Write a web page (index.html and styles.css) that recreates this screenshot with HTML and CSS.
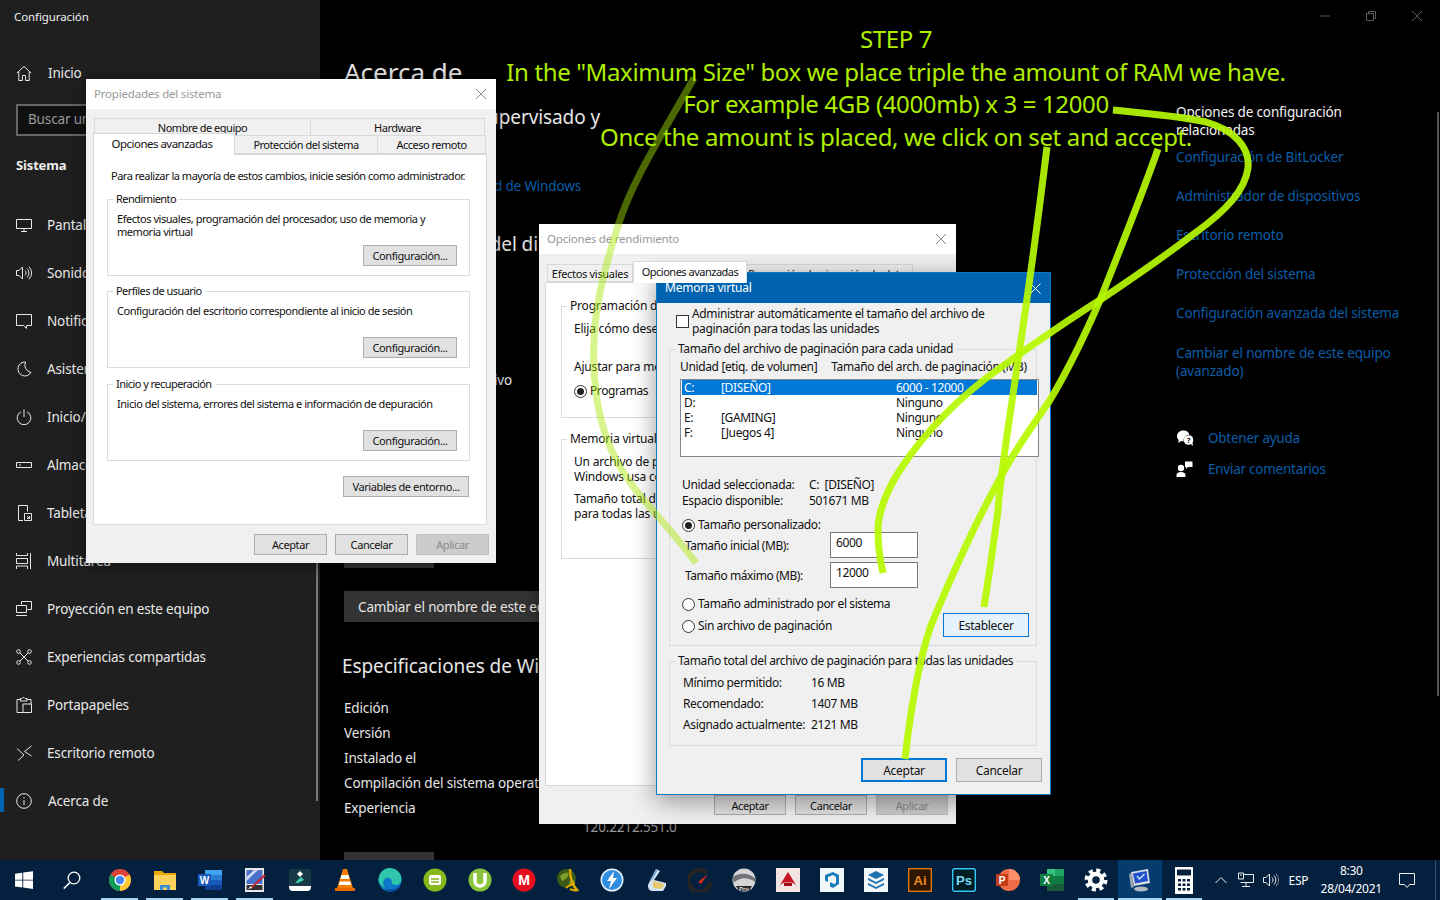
FILE: index.html
```html
<!DOCTYPE html>
<html lang="es">
<head>
<meta charset="utf-8">
<title>Configuración</title>
<link rel="stylesheet" href="styles.css">
</head>
<body>
<svg class="defs" aria-hidden="true">
  <defs>
    <symbol id="i-home" viewBox="0 0 16 16"><path d="M.8 8.2 8 1.4l7.2 6.8M2.8 6.6v8.9h3.6v-5h3.2v5h3.6V6.6"/></symbol>
    <symbol id="i-display" viewBox="0 0 16 16"><path d="M.5 2.5h15v9H.5zM8 11.5v3M5 14.5h6"/></symbol>
    <symbol id="i-sound" viewBox="0 0 16 16"><path d="M.5 5.5h2.5l3.5-3.5v12L3 10.5H.5zM9 5.5a3.4 3.4 0 0 1 0 5M11 3.5a6.2 6.2 0 0 1 0 9M13 1.8a8.8 8.8 0 0 1 0 12.4"/></symbol>
    <symbol id="i-notif" viewBox="0 0 16 16"><path d="M.5 1.5h15v11h-5v3l-3-3h-7z"/></symbol>
    <symbol id="i-moon" viewBox="0 0 16 16"><path d="M9.5 1a7 7 0 1 0 5.5 10.5A7.5 7.5 0 0 1 9.5 1z"/></symbol>
    <symbol id="i-power" viewBox="0 0 16 16"><path d="M5 2.8a6.8 6.8 0 1 0 6 0M8 .5v7.5"/></symbol>
    <symbol id="i-storage" viewBox="0 0 16 16"><path d="M.5 5.5h15v5H.5zM3 8h2"/></symbol>
    <symbol id="i-tablet" viewBox="0 0 16 16"><path d="M2.5.5h9v6M7 15.5H2.5V.5M8.5 8.5h7v7h-7zM11 11l2.5 2.5M13.500 11v2.500H11"/></symbol>
    <symbol id="i-multi" viewBox="0 0 16 16"><path d="M.5 0v2.500h11V0M3.500 5.500h8M.5 5.500v5h11v-5zM.5 16v-3h11v3M14.500 0v16"/></symbol>
    <symbol id="i-project" viewBox="0 0 16 16"><path d="M5.500 3.500V.5h10v8h-4M.5 4.500h10v7H.5zM0 14.500h11"/></symbol>
    <symbol id="i-share" viewBox="0 0 16 16"><circle cx="2.500" cy="2.500" r="1.800"/><circle cx="13.500" cy="2.500" r="1.800"/><circle cx="2.500" cy="13.500" r="1.800"/><circle cx="13.500" cy="13.500" r="1.800"/><path d="m4 4 8 8M12 4l-8 8"/></symbol>
    <symbol id="i-clip" viewBox="0 0 16 16"><path d="M5 2.500H1v13h6M11 2.500h4v5M4.500 4V1.500H6L7 .5h1l1 1h2V4zM7 7h8.500v8.500H7zM7 7"/></symbol>
    <symbol id="i-remote" viewBox="0 0 16 16"><path d="m1 3.500 7 6.500-6 5.500M15.500 1 8.500 6.500 15.500 11"/></symbol>
    <symbol id="i-info" viewBox="0 0 16 16"><circle cx="8" cy="8" r="7.300"/><path d="M8 7v5M8 4v1.500"/></symbol>
  </defs>
</svg>

<div class="screen">
  <div class="app">
    <aside class="side">
      <div class="app-title">Configuración</div>
      <div class="nav-row nav-home"><svg class="ico"><use href="#i-home"/></svg><span>Inicio</span></div>
      <div class="search">Buscar una configuración</div>
      <div class="side-head">Sistema</div>
      <nav class="nav">
        <div class="nav-row"><svg class="ico"><use href="#i-display"/></svg><span>Pantalla</span></div>
        <div class="nav-row"><svg class="ico"><use href="#i-sound"/></svg><span>Sonido</span></div>
        <div class="nav-row"><svg class="ico"><use href="#i-notif"/></svg><span>Notificaciones y acciones</span></div>
        <div class="nav-row"><svg class="ico"><use href="#i-moon"/></svg><span>Asistente de concentración</span></div>
        <div class="nav-row"><svg class="ico"><use href="#i-power"/></svg><span>Inicio/apagado y suspensión</span></div>
        <div class="nav-row"><svg class="ico"><use href="#i-storage"/></svg><span>Almacenamiento</span></div>
        <div class="nav-row"><svg class="ico"><use href="#i-tablet"/></svg><span>Tableta</span></div>
        <div class="nav-row"><svg class="ico"><use href="#i-multi"/></svg><span>Multitarea</span></div>
        <div class="nav-row"><svg class="ico"><use href="#i-project"/></svg><span>Proyección en este equipo</span></div>
        <div class="nav-row"><svg class="ico"><use href="#i-share"/></svg><span>Experiencias compartidas</span></div>
        <div class="nav-row"><svg class="ico"><use href="#i-clip"/></svg><span>Portapapeles</span></div>
        <div class="nav-row"><svg class="ico"><use href="#i-remote"/></svg><span>Escritorio remoto</span></div>
        <div class="nav-row nav-active"><svg class="ico"><use href="#i-info"/></svg><span>Acerca de</span></div>
      </nav>
      <div class="side-scroll"></div>
    </aside>

    <main class="main">
      <div class="caption">
        <div class="cap-btn"><svg width="10" height="10" viewBox="0 0 10 10"><path d="M0 5h10"/></svg></div>
        <div class="cap-btn"><svg width="10" height="10" viewBox="0 0 10 10"><path d="M.5 2.500h7v7h-7zM2.500 2.500v-2h7v7h-2"/></svg></div>
        <div class="cap-btn"><svg width="10" height="10" viewBox="0 0 10 10"><path d="m0 0 10 10M10 0 0 10"/></svg></div>
      </div>
      <div class="main-body">
        <section class="content">
          <h1 class="h-page">Acerca de</h1>
          <p class="h-sub hidden-left">El equipo está supervisado y</p>
          <p class="link-line hidden-left">Configuración de seguridad de Windows</p>
          <p class="h-sub2 hidden-left">Especificaciones del di</p>
          <p class="text-line hidden-left">Tipo de sistema operativo</p>
          <div class="btn-dark btn-copy"></div>
          <div class="btn-dark btn-rename">Cambiar el nombre de este equipo</div>
          <h2 class="h-spec">Especificaciones de Windows</h2>
          <dl class="spec">
            <dt>Edición</dt><dd>Windows 10 Pro</dd>
            <dt>Versión</dt><dd>20H2</dd>
            <dt>Instalado el</dt><dd>28/04/2021</dd>
            <dt>Compilación del sistema operativo</dt><dd>19042.928</dd>
            <dt>Experiencia</dt><dd>Windows Feature Experience Pack<br><span class="ver">120.2212.551.0</span></dd>
          </dl>
          <div class="btn-dark btn-last"></div>
        </section>
        <section class="related">
          <div class="rel-head">Opciones de configuración relacionadas</div>
          <a class="rel-link">Configuración de BitLocker</a>
          <a class="rel-link">Administrador de dispositivos</a>
          <a class="rel-link">Escritorio remoto</a>
          <a class="rel-link">Protección del sistema</a>
          <a class="rel-link">Configuración avanzada del sistema</a>
          <a class="rel-link">Cambiar el nombre de este equipo (avanzado)</a>
          <div class="rel-help">
            <svg width="18" height="16" viewBox="0 0 18 16"><path class="fill-w" d="M1 6.500C1 3 3.800 .5 7 .5s6 1.500 6.300 4.200a5.500 5.500 0 0 0-5.800 5.300c0 .6.100 1 .2 1.400-1 0-1.800-.1-2.600-.4L2 13l.8-3C1.700 9 1 7.900 1 6.500z"/><circle class="fill-w" cx="12.500" cy="10" r="4.800"/><path class="fill-w" d="m14 13 3 3-.6-4z"/><text class="q" x="12.500" y="12.800">?</text></svg>
            <a>Obtener ayuda</a>
          </div>
          <div class="rel-help rel-help2">
            <svg width="18" height="16" viewBox="0 0 18 16"><circle class="fill-w" cx="5" cy="7" r="3.200"/><path class="fill-w" d="M.5 16v-2c0-2 2-3 4.500-3s4.500 1 4.500 3v2zM9 .5h7.500v5.500H12l-2 2V6H9z"/></svg>
            <a>Enviar comentarios</a>
          </div>
        </section>
      </div>
      <div class="main-scroll"></div>
    </main>
  </div>

  <!-- Propiedades del sistema -->
  <div class="win win-sys">
    <div class="win-title"><span>Propiedades del sistema</span><svg class="x" width="10" height="10" viewBox="0 0 10 10"><path d="m0 0 10 10M10 0 0 10"/></svg></div>
    <div class="sys-tabs">
      <div class="tab-row">
        <div class="tab t1">Nombre de equipo</div>
        <div class="tab t2">Hardware</div>
      </div>
      <div class="tab-row tab-row2">
        <div class="tab tab-on t3">Opciones avanzadas</div>
        <div class="tab t4">Protección del sistema</div>
        <div class="tab t5">Acceso remoto</div>
      </div>
    </div>
    <div class="sys-panel">
      <p class="sys-lead">Para realizar la mayoría de estos cambios, inicie sesión como administrador.</p>
      <fieldset class="grp sys-grp">
        <legend>Rendimiento</legend>
        <p>Efectos visuales, programación del procesador, uso de memoria y memoria virtual</p>
        <button class="btn btn-conf">Configuración...</button>
      </fieldset>
      <fieldset class="grp sys-grp">
        <legend>Perfiles de usuario</legend>
        <p>Configuración del escritorio correspondiente al inicio de sesión</p>
        <button class="btn btn-conf">Configuración...</button>
      </fieldset>
      <fieldset class="grp sys-grp">
        <legend>Inicio y recuperación</legend>
        <p>Inicio del sistema, errores del sistema e información de depuración</p>
        <button class="btn btn-conf">Configuración...</button>
      </fieldset>
      <button class="btn btn-env">Variables de entorno...</button>
    </div>
    <div class="sys-foot">
      <button class="btn">Aceptar</button>
      <button class="btn">Cancelar</button>
      <button class="btn btn-off">Aplicar</button>
    </div>
  </div>

  <!-- Opciones de rendimiento -->
  <div class="win win-perf">
    <div class="win-title"><span>Opciones de rendimiento</span><svg class="x" width="10" height="10" viewBox="0 0 10 10"><path d="m0 0 10 10M10 0 0 10"/></svg></div>
    <div class="perf-tabs">
      <div class="tab p1">Efectos visuales</div>
      <div class="tab tab-on p2">Opciones avanzadas</div>
      <div class="tab p3">Prevención de ejecución de datos</div>
    </div>
    <div class="perf-panel">
      <fieldset class="grp perf-g1">
        <legend>Programación del procesador</legend>
        <p class="pl">Elija cómo desea asignar los recursos</p>
        <p class="pl pl-gap">Ajustar para mejorar el rendimiento de:</p>
        <div class="radio-row perf-radio"><span class="radio radio-on"></span>Programas</div>
      </fieldset>
      <fieldset class="grp perf-g2">
        <legend>Memoria virtual</legend>
        <p class="pl">Un archivo de paginación es un área del disco<br>Windows usa como si fuera RAM.</p>
        <p class="pl pl-gap2">Tamaño total de archivo de paginación<br>para todas las unidades:</p>
      </fieldset>
    </div>
    <div class="perf-foot">
      <button class="btn">Aceptar</button>
      <button class="btn">Cancelar</button>
      <button class="btn btn-off">Aplicar</button>
    </div>
  </div>

  <!-- Memoria virtual -->
  <div class="win win-vm">
    <div class="vm-title"><span>Memoria virtual</span><svg class="x-w" width="11" height="11" viewBox="0 0 11 11"><path d="m.5.5 10 10M10.500.5l-10 10"/></svg></div>
    <div class="vm-body">
      <div class="vm-auto"><span class="check"></span><span>Administrar automáticamente el tamaño del archivo de paginación para todas las unidades</span></div>
      <fieldset class="grp vm-g1">
        <legend>Tamaño del archivo de paginación para cada unidad</legend>
        <div class="vm-head"><span>Unidad [etiq. de volumen]</span><span>Tamaño del arch. de paginación (MB)</span></div>
        <div class="vm-list">
          <div class="vm-row vm-row-on"><span>C:</span><span>[DISEÑO]</span><span>6000 - 12000</span></div>
          <div class="vm-row"><span>D:</span><span></span><span>Ninguno</span></div>
          <div class="vm-row"><span>E:</span><span>[GAMING]</span><span>Ninguno</span></div>
          <div class="vm-row"><span>F:</span><span>[Juegos 4]</span><span>Ninguno</span></div>
        </div>
        <div class="vm-info">
          <span>Unidad seleccionada:</span><span>C:&nbsp; [DISEÑO]</span>
          <span>Espacio disponible:</span><span>501671 MB</span>
        </div>
        <div class="radio-row vm-r1"><span class="radio radio-on"></span>Tamaño personalizado:</div>
        <div class="vm-size vm-size1"><label>Tamaño inicial (MB):</label><div class="field">6000</div></div>
        <div class="vm-size vm-size2"><label>Tamaño máximo (MB):</label><div class="field">12000</div></div>
        <div class="radio-row vm-r2"><span class="radio"></span>Tamaño administrado por el sistema</div>
        <div class="vm-last">
          <div class="radio-row vm-r3"><span class="radio"></span>Sin archivo de paginación</div>
          <button class="btn btn-set">Establecer</button>
        </div>
      </fieldset>
      <fieldset class="grp vm-g2">
        <legend>Tamaño total del archivo de paginación para todas las unidades</legend>
        <div class="vm-total">
          <span>Mínimo permitido:</span><span>16 MB</span>
          <span>Recomendado:</span><span>1407 MB</span>
          <span>Asignado actualmente:</span><span>2121 MB</span>
        </div>
      </fieldset>
      <div class="vm-foot">
        <button class="btn btn-vm btn-def">Aceptar</button>
        <button class="btn btn-vm">Cancelar</button>
      </div>
    </div>
  </div>

  <!-- Anotación -->
  <div class="note">
    <div class="note-step">STEP 7</div>
    <div>In the "Maximum Size" box we place triple the amount of RAM we have.</div>
    <div>For example 4GB (4000mb) x 3 = 12000</div>
    <div>Once the amount is placed, we click on set and accept.</div>
  </div>
  <svg class="strokes" width="1440" height="860" viewBox="0 0 1440 860">
    <path class="s-faint" d="M694 78C665 130 632 180 618 226C597 290 588 340 597 400C605 450 625 480 655 513C670 530 685 548 696 563"/>
    <path class="s" d="M1113 110C1150 114 1180 116 1206 122C1235 130 1250 148 1248 168C1245 190 1227 210 1195 233C1165 256 1130 280 1100 300C1065 322 1035 343 1000 368C960 396 925 432 902 467C885 492 878 515 878 530C878 545 880 560 883 573"/>
    <path class="s" d="M1047 147C1038 220 1028 295 1017 367C1008 430 1001 470 998 510C993 550 988 580 984 607"/>
    <path class="s" d="M1158 149C1140 200 1120 250 1100 300C1085 335 1068 370 1050 400C1030 430 1015 450 1003 473C985 505 960 555 930 628C918 665 910 715 905 759"/>
  </svg>

  <!-- Barra de tareas -->
  <footer class="taskbar">
    <div class="tb-fixed">
      <svg width="18" height="18" viewBox="0 0 18 18"><path class="fill-w" d="M0 2.700 7.300 1.700v7H0zM8.200 1.600 18 .2v8.500H8.200zM0 9.600h7.300v7L0 15.500zM8.200 9.600H18V18L8.200 16.600z"/></svg>
    </div>
    <div class="tb-fixed">
      <svg width="18" height="18" viewBox="0 0 18 18"><circle class="stroke-w" cx="11" cy="7" r="5.800"/><path class="stroke-w thick" d="M7 11.500.8 17.500"/></svg>
    </div>
    <div class="tb-apps">
      <div class="slot on"><svg class="app-i" viewBox="0 0 24 24"><circle cx="12" cy="12" r="11" fill="#db4437"/><path d="M12 12 2.500 6.500A11 11 0 0 0 12 23z" fill="#0f9d58"/><path d="M12 12v11A11 11 0 0 0 21.500 6.500z" fill="#fcc934"/><circle cx="12" cy="12" r="5.500" fill="#fff"/><circle cx="12" cy="12" r="4.200" fill="#4285f4"/></svg></div>
      <div class="slot on"><svg class="app-i" viewBox="0 0 24 24"><path d="M1 3h8l2 2h12v17H1z" fill="#e8a800"/><path d="M1 7h22v15H1z" fill="#fbd35c"/><path d="M7 22v-5h10v5h-3v-2.500h-4V22z" fill="#3b8fd8"/></svg></div>
      <div class="slot on"><svg class="app-i" viewBox="0 0 24 24"><path d="M7 2h17v5H7z" fill="#41a5ee"/><path d="M7 7h17v5H7z" fill="#2b7cd3"/><path d="M7 12h17v5H7z" fill="#185abd"/><path d="M7 17h17v5H7z" fill="#103f91"/><rect y="6" width="13" height="12" fill="#185abd"/><text class="t-i" x="6.500" y="15.500" fill="#fff" font-size="10">W</text></svg></div>
      <div class="slot on"><svg class="app-i" viewBox="0 0 24 24"><rect x="2" width="19" height="24" fill="#e8e8e8"/><rect x="3.500" y="2" width="16" height="14" fill="#4a6fc9"/><path d="M3.500 9 11 2h4L3.500 13z" fill="#cbd9f4"/><rect x="3.500" y="17" width="16" height="5" fill="#333"/><path d="M8 20 22 7" stroke="#c8222c" stroke-width="1.800" fill="none"/><path d="M5 21l3-3 1 2z" fill="#fff"/></svg></div>
      <div class="slot"><svg class="app-i" viewBox="0 0 24 24"><rect x="1" y="1" width="22" height="22" rx="4" fill="#173a46"/><path d="M1 18h22v1a4 4 0 0 1-4 4H5a4 4 0 0 1-4-4z" fill="#fff"/><path d="M9 6l3-3 3 3-3 3z" fill="#fff"/><path d="M7 15l6-6 3 3-6 3z" fill="#3dd2b8"/></svg></div>
      <div class="slot"><svg class="app-i" viewBox="0 0 24 24"><path d="M10 1h4l6 19H4z" fill="#f57c00"/><path d="M8.500 7h7l1 4h-9zM6.800 13.500h10.400l1 3.500H5.800z" fill="#fff"/><path d="M2 20h20v3H2z" fill="#e96a00"/></svg></div>
      <div class="slot"><svg class="app-i" viewBox="0 0 24 24"><circle cx="12" cy="12" r="11.500" fill="#0e77c9"/><path d="M.5 12A11.500 11.500 0 0 1 23.500 11c0 4-3 6-6 6-4 0-4-3-4-4 0-2-2-4-5-3C5 11 4 16 7 20 3 18 .5 15 .5 12z" fill="#2fc4ac"/><path d="M13 21c4 1 8-2 10-6 0 5-5 9-11 8.500-2 0-4-1-5-3 2 1 4 1 6 .5z" fill="#0a4fa3"/></svg></div>
      <div class="slot"><svg class="app-i" viewBox="0 0 24 24"><circle cx="12" cy="12" r="11.500" fill="#86b81b"/><rect x="6" y="7" width="12" height="10" rx="2" fill="#fff"/><path d="M8 11h8M8 14h8" stroke="#86b81b" stroke-width="1.500"/></svg></div>
      <div class="slot"><svg class="app-i" viewBox="0 0 24 24"><circle cx="12" cy="12" r="11.500" fill="#8ac43f"/><path d="M7 5v8a5 5 0 0 0 10 0V5" fill="none" stroke="#fff" stroke-width="3.500"/></svg></div>
      <div class="slot"><svg class="app-i" viewBox="0 0 24 24"><circle cx="12" cy="12" r="11.500" fill="#e5101f"/><text class="t-i" x="12" y="17" fill="#fff" font-size="14">M</text></svg></div>
      <div class="slot"><svg class="app-i" viewBox="0 0 24 24"><circle cx="10.500" cy="10.500" r="9.500" fill="#3c5a14"/><path d="M4 8c3-3 6-4 9-3l-2 5-5 3zM13 14l5-2 1 3-4 3z" fill="#7d9e2a"/><path d="M14 1c0 8 2 16 7 21-3 1-5 0-7-1" fill="none" stroke="#d8a800" stroke-width="2.500"/><path d="M10 20c3-3 6-4 9-4" fill="none" stroke="#d8a800" stroke-width="2"/></svg></div>
      <div class="slot"><svg class="app-i" viewBox="0 0 24 24"><circle cx="12" cy="12" r="11.500" fill="#e6f2fb"/><circle cx="12" cy="12" r="10" fill="#2f8ee0"/><path d="M14 3 7 13h4l-2 8 8-11h-4z" fill="#fff"/></svg></div>
      <div class="slot"><svg class="app-i" viewBox="0 0 24 24"><path d="M12 1l4 2-6 9 12 3v3l-3 5H9c-3 0-5-2-5-5 0-2 1-3 2-5z" fill="#d7e4f5"/><path d="M9 13l11 3-2 5-9-1z" fill="#e6cb6b"/><path d="M7 12l6-10" stroke="#7ba7d9" stroke-width="1.500"/></svg></div>
      <div class="slot"><svg class="app-i" viewBox="0 0 24 24"><path d="M19 5a11 11 0 1 0 3.500 9" fill="none" stroke="#242424" stroke-width="4.500"/><path d="M10 14 20 6 13 16z" fill="#d22a1f"/></svg></div>
      <div class="slot"><svg class="app-i" viewBox="0 0 24 24"><circle cx="12" cy="12" r="11.500" fill="#d5d5d5"/><path d="M1 9c7-5 15-4 22 1v4C16 9 8 9 1.500 15z" fill="#6f7378"/><path d="M4 18h16l-3 5H7z" fill="#2a2a2a"/><text class="t-i" x="12" y="22.500" fill="#ddd" font-size="6">Pro</text></svg></div>
      <div class="slot"><svg class="app-i" viewBox="0 0 24 24"><rect width="24" height="24" fill="#f3e4e4"/><path d="M12 4 4 17l4-2.500h8l4 2.500z" fill="#c8141f"/><path d="M8 15v3h8v-3z" fill="#9e0f19"/></svg></div>
      <div class="slot"><svg class="app-i" viewBox="0 0 24 24"><rect width="24" height="24" fill="#f3f6fa"/><path d="M5 7l8-3 6 3v9l-6 4-3-1.500V14l4 2 2-1V9l-3-2-5 2v5l-3-1.500z" fill="#1a7fb8"/></svg></div>
      <div class="slot"><svg class="app-i" viewBox="0 0 24 24"><rect width="24" height="24" fill="#f3f6fa"/><path d="M12 3l8 4-8 4-8-4zM4 10l8 4 8-4v2l-8 4-8-4zM4 15l8 4 8-4v2l-8 4-8-4z" fill="#2173ad"/></svg></div>
      <div class="slot"><svg class="app-i" viewBox="0 0 24 24"><rect x=".7" y=".7" width="22.600" height="22.600" fill="#2d1500" stroke="#d9730d" stroke-width="1.400"/><text class="t-i" x="12" y="17" fill="#ee8a1f" font-size="13">Ai</text></svg></div>
      <div class="slot"><svg class="app-i" viewBox="0 0 24 24"><rect x=".7" y=".7" width="22.600" height="22.600" rx="2" fill="#001d26" stroke="#31c5f0" stroke-width="1.400"/><text class="t-i" x="12" y="17" fill="#7fdbf5" font-size="13">Ps</text></svg></div>
      <div class="slot"><svg class="app-i" viewBox="0 0 24 24"><circle cx="13" cy="12" r="11" fill="#ed6c47"/><path d="M13 1a11 11 0 0 1 11 11H13z" fill="#ff8f6b"/><rect y="6" width="12" height="12" rx="1" fill="#c43e1c"/><text class="t-i" x="6" y="15.500" fill="#fff" font-size="10">P</text></svg></div>
      <div class="slot"><svg class="app-i" viewBox="0 0 24 24"><path d="M7 1h17v7H7z" fill="#33c481"/><path d="M7 8h17v8H7z" fill="#107c41"/><path d="M7 16h17v7H7z" fill="#185c37"/><path d="M15 1h9v7h-9z" fill="#21a366"/><rect y="6" width="13" height="12" fill="#107c41"/><text class="t-i" x="6.500" y="15.500" fill="#fff" font-size="10">X</text></svg></div>
      <div class="slot on"><svg class="app-i" viewBox="0 0 24 24"><circle class="gear" cx="12" cy="12" r="6"/><circle class="gear-t" cx="12" cy="12" r="9.500"/></svg></div>
      <div class="slot on slot-active"><svg class="app-i" viewBox="0 0 24 24"><path d="M3 4l17-3 2 14-16 3z" fill="#d9dee6"/><path d="M5 5.500 18.500 3l1.500 10-13 2.500z" fill="#1f4fc9"/><path d="M9 8l2.500 3 5-5" fill="none" stroke="#cfe0ff" stroke-width="1.500"/><path d="M1 6l3-1 2 14-3 1z" fill="#9aa3b0"/><ellipse cx="13" cy="21" rx="7" ry="2.500" fill="#b4bac4"/></svg></div>
      <div class="slot on"><svg class="app-i calc" viewBox="0 0 20 27"><path fill="#fff" fill-rule="evenodd" d="M1 0h18v27H1zM3 2.500v6h14v-6zM4 12v2.500h3V12zM8.500 12v2.500h3V12zM13 12v2.500h3V12zM4 16.500V19h3v-2.500zM8.500 16.500V19h3v-2.500zM13 16.500V19h3v-2.500zM4 21v2.500h3V21zM8.500 21v2.500h3V21zM13 21v2.500h3V21z"/></svg></div>
    </div>
    <div class="tray">
      <svg class="tr-chev" width="12" height="8" viewBox="0 0 12 8"><path d="M.5 7 6 1.500 11.500 7"/></svg>
      <svg class="tr-net" width="16" height="16" viewBox="0 0 16 16"><path d="M5.500 2.500h10v8H2.500M.5 1h5v6h-5zM2 3h2M8 10.500v4M4 14.500h8"/></svg>
      <svg class="tr-vol" width="16" height="16" viewBox="0 0 16 16"><path d="M.5 5.500h2.500l3.500-3.500v12L3 10.500H.5zM9 5.500a3.400 3.400 0 0 1 0 5M11 3.500a6.200 6.200 0 0 1 0 9"/><path class="dim" d="M13 1.800a8.800 8.800 0 0 1 0 12.400"/></svg>
      <span class="tr-lang">ESP</span>
      <div class="tr-clock"><span>8:30</span><span>28/04/2021</span></div>
      <svg class="tr-note" width="16" height="16" viewBox="0 0 16 16"><path d="M.5 1.500h15v11h-5l-2.500 3-2.500-3h-5z"/></svg>
      <span class="tr-edge"></span>
    </div>
  </footer>
</div>
</body>
</html>
```

FILE: styles.css
```css
* { box-sizing: border-box; }
html, body { margin: 0; padding: 0; }
body { width: 1440px; height: 900px; overflow: hidden; background: #000; font-family: "Noto Sans", "Open Sans", sans-serif; }
p, h1, h2, dl, dd, dt { margin: 0; font-weight: normal; }
.defs { width: 0; height: 0; display: block; }
.screen { position: relative; width: 1440px; height: 900px; overflow: hidden; display: flex; flex-direction: column; }

/* Settings app */
.app { display: flex; height: 860px; overflow: hidden; }
.side { position: relative; width: 320px; height: 860px; background: #1f1f1f; color: #e8e8e8; flex: none; }
.app-title { height: 32px; padding-left: 14px; font-size: 11.500px; letter-spacing: -.1px; line-height: 34px; color: #f0f0f0; }
.nav-home { margin-top: 17px; }
.search { width: 288px; height: 32px; margin: 7px 0 0 16px; border: 2px solid #666; background: #101010; color: #999; font-size: 13.500px; letter-spacing: -.15px; line-height: 26px; padding-left: 10px; }
.side-head { margin: 19px 0 0 16px; height: 20px; font-size: 13px; letter-spacing: -.15px; line-height: 20px; font-weight: 700; color: #eee; }
.nav { margin-top: 26px; }
.nav-row { position: relative; display: flex; align-items: center; gap: 15px; height: 48px; padding-left: 16px; font-size: 13.500px; white-space: nowrap; letter-spacing: -.15px; }
.nav-home, .nav-active { gap: 16px; }
.nav-active::before { content: ""; position: absolute; left: 0; top: 11px; width: 4px; height: 24px; background: #0063b1; }
.ico { width: 16px; height: 16px; flex: none; fill: none; stroke: #e8e8e8; stroke-width: 1; }
.side-scroll { position: absolute; left: 316px; top: 300px; width: 2px; height: 501px; background: #777; }

.main { position: relative; flex: 1; background: #000; color: #e6e6e6; }
.caption { display: flex; justify-content: flex-end; height: 32px; }
.cap-btn { width: 46px; height: 32px; display: flex; align-items: center; justify-content: center; }
.cap-btn svg { fill: none; stroke: #5a5a5a; stroke-width: 1; }
.main-body { display: flex; }
.content { width: 856px; padding: 20px 0 0 24px; flex: none; }
.h-page { height: 40px; font-size: 26px; line-height: 40px; }
.hidden-left { display: flex; justify-content: flex-end; white-space: nowrap; }
.h-sub { width: 256px; margin-top: 11px; height: 28px; font-size: 19px; letter-spacing: -.1px; line-height: 28px; }
.link-line { margin-top: 45px; height: 20px; font-size: 13.500px; letter-spacing: -.15px; line-height: 20px; color: #0b5ea8; width: 237px; }
.h-sub2 { margin-top: 34px; height: 28px; font-size: 19px; letter-spacing: -.1px; line-height: 28px; width: 194px; }
.text-line { margin-top: 112px; height: 20px; font-size: 13.500px; letter-spacing: -.15px; line-height: 20px; width: 168px; }
.btn-dark { background: #333; color: #e6e6e6; font-size: 13.500px; letter-spacing: -.15px; }
.btn-copy { width: 90px; height: 32px; margin-top: 146px; }
.btn-rename { width: 300px; height: 31px; margin-top: 23px; padding-left: 14px; line-height: 33px; white-space: nowrap; }
.h-spec { margin: 30px 0 0 -2px; height: 28px; font-size: 19px; letter-spacing: -.1px; line-height: 28px; white-space: nowrap; }
.spec { margin-top: 16px; display: grid; grid-template-columns: 239px 300px; grid-auto-rows: 25px; font-size: 13.500px; line-height: 25px; letter-spacing: -.15px; }
.spec dd { line-height: 19px; padding-top: 3px; white-space: nowrap; }
.ver { color: #aaa; }
.btn-last { width: 90px; height: 32px; margin-top: 31px; }

.related { width: 228px; padding-top: 71px; font-size: 13.500px; letter-spacing: -.15px; line-height: 18px; color: #0b5ea8; flex: none; }
.rel-head { color: #f2f2f2; width: 190px; }
.rel-link { display: block; margin-top: 21px; }
.rel-head + .rel-link { margin-top: 9px; }
.rel-link:nth-of-type(6) { margin-top: 22px; }
.rel-help { display: flex; align-items: center; gap: 14px; margin-top: 49px; height: 18px; letter-spacing: -.25px; }
.rel-help2 { margin-top: 13px; }
.fill-w { fill: #fff; }
.stroke-w { fill: none; stroke: #fff; stroke-width: 1.3; }
.thick { stroke-width: 1.700; }
.q { font-size: 7px; font-weight: 700; text-anchor: middle; fill: #000; }
.main-scroll { position: absolute; right: 1px; top: 112px; width: 2px; height: 584px; background: #555; }

/* Dialog windows */
.win { position: absolute; background: #f0f0f0; color: #111; box-shadow: 0 2px 14px rgba(0, 0, 0, .45); }
.win-title { position: relative; height: 30px; background: #fff; color: #999; font-size: 11.500px; letter-spacing: -.2px; line-height: 30px; padding-left: 8px; display: flex; justify-content: space-between; align-items: center; }
.x { margin-right: 10px; fill: none; stroke: #8a8a8a; stroke-width: 1; }
.tab { display: flex; align-items: center; justify-content: center; background: #f0f0f0; border: 1px solid #d9d9d9; height: 18px; font-size: 11px; white-space: nowrap; letter-spacing: -.5px; }
.tab-on { background: #fff; }
.btn { width: 73px; height: 21px; padding: 0; border: 1px solid #adadad; background: #e1e1e1; font: 11px "Noto Sans", sans-serif; letter-spacing: -.4px; color: #111; flex: none; }
.btn-off { color: #8a8a8a; background: #ccc; border-color: #bfbfbf; }
.grp { margin: 0; min-width: 0; border: 1px solid #dcdcdc; padding: 0; display: flex; flex-direction: column; }
.grp legend { padding: 0 3px; font-size: 11px; line-height: 14px; letter-spacing: -.55px; white-space: nowrap; }

.win-sys { left: 86px; top: 79px; width: 410px; height: 484px; }
.sys-tabs { padding: 9px 0 0 8px; }
.tab-row { display: flex; }
.tab-row2 { position: relative; z-index: 1; margin-top: -1px; }
.t1 { width: 217px; }
.t2 { width: 175px; margin-left: -1px; }
.t3 { width: 142px; height: 22px; margin: -2px 0 0 -1px; border-bottom: 0; padding: 0 4px 3px 0; font-size: 11.500px; letter-spacing: -.53px; }
.t4 { width: 144px; height: 19px; margin-left: -1px; }
.t5 { width: 109px; height: 19px; margin-left: -1px; }
.sys-panel { width: 394px; height: 371px; margin: -1px 0 0 7px; background: #fff; border: 1px solid #d9d9d9; padding: 14px 0 0 13px; font-size: 11px; letter-spacing: -.46px; }
.sys-lead { height: 14px; line-height: 14px; padding-left: 4px; white-space: nowrap; letter-spacing: -.49px; }
.sys-grp { width: 363px; height: 84px; margin-top: 8px; padding: 0 12px 9px 9px; }
.sys-lead + .sys-grp { margin-top: 9px; }
.sys-grp + .sys-grp + .sys-grp { margin-top: 9px; }
.sys-grp legend { margin-left: -4px; }
.sys-grp p { margin-top: 6px; line-height: 13px; }
.btn-conf { width: 94px; margin: auto 0 0 auto; }
.btn-env { display: block; width: 126px; margin: 15px 0 0 236px; }
.sys-foot { display: flex; justify-content: flex-end; gap: 8px; padding: 9px 7px 0 0; }

.win-perf { left: 539px; top: 224px; width: 417px; height: 600px; }
.perf-tabs { display: flex; align-items: flex-end; height: 28px; padding: 0 0 0 8px; }
.p1 { width: 86px; letter-spacing: -.3px; }
.p2 { position: relative; z-index: 1; width: 114px; height: 22px; margin: 0 0 -1px 0; border-bottom: 0; padding-bottom: 2px; }
.p3 { width: 167px; margin-left: -1px; letter-spacing: -.3px; }
.perf-panel { width: 405px; height: 504px; margin-left: 6px; background: #fff; border: 1px solid #d9d9d9; padding: 15px 0 0 15px; font-size: 12px; letter-spacing: -.2px; }
.perf-panel legend { font-size: 12px; margin-left: -7px; line-height: 16px; letter-spacing: -.2px; }
.perf-g1 { width: 370px; height: 120px; padding-left: 12px; }
.perf-g2 { width: 370px; height: 128px; margin-top: 13px; padding-left: 12px; }
.pl { white-space: nowrap; line-height: 15px; margin-top: 7px; }
.pl-gap { margin-top: 23px; }
.pl-gap2 { margin-top: 7px; }
.perf-radio { margin: 9px 0 0 0; letter-spacing: -.2px; }
.perf-foot { display: flex; justify-content: flex-end; gap: 9px; padding: 9px 8px 0 0; }
.perf-foot .btn { width: 72px; height: 20px; }

.radio-row { display: flex; align-items: center; gap: 3px; font-size: 12px; line-height: 16px; white-space: nowrap; letter-spacing: -.4px; }
.radio { width: 13px; height: 13px; border: 1px solid #333; border-radius: 50%; background: #fff; flex: none; display: flex; align-items: center; justify-content: center; }
.radio-on::before { content: ""; width: 7px; height: 7px; border-radius: 50%; background: #222; }

.win-vm { left: 656px; top: 272px; width: 395px; height: 523px; border: 1px solid #0a78c8; box-shadow: 0 6px 24px rgba(0, 0, 0, .4); font-size: 12px; letter-spacing: -.36px; }
.vm-title { height: 30px; background: #0063b1; color: #fff; padding: 0 9px 2px 8px; display: flex; justify-content: space-between; align-items: center; letter-spacing: -.2px; }
.x-w { fill: none; stroke: #fff; stroke-width: 1; margin-top: 2px; }
.vm-body { padding: 3px 0 0 12px; }
.vm-auto { display: flex; gap: 3px; margin-left: 7px; line-height: 15px; width: 330px; }
.check { width: 13px; height: 13px; margin-top: 9px; border: 1px solid #333; background: #fff; flex: none; }
.grp.vm-g1 { width: 368px; height: 304px; margin-top: 6px; padding: 0 7px 0 10px; }
.win-vm legend { margin-left: -5px; font-size: 12px; letter-spacing: -.37px; }
.vm-head { display: flex; gap: 14px; margin-top: 4px; height: 14px; line-height: 14px; white-space: nowrap; }
.vm-list { width: 359px; height: 78px; margin-top: 5px; border: 1px solid #828790; background: #fff; padding: 0 1px; }
.vm-row { display: grid; grid-template-columns: 37px 175px 1fr; height: 15px; line-height: 15px; padding-left: 2px; }
.vm-row-on { background: #0078d7; color: #fff; }
.vm-info { display: grid; grid-template-columns: 127px auto; margin: 20px 0 0 2px; line-height: 16px; }
.vm-r1 { margin: 8px 0 0 2px; }
.vm-size { display: flex; align-items: center; margin: 0 0 0 5px; letter-spacing: -.45px; }
.vm-size label { width: 145px; }
.vm-size1 { height: 26px; margin-top: -1px; }
.vm-size2 { height: 26px; margin-top: 4px; }
.field { width: 88px; height: 26px; border: 1px solid #7a7a7a; background: #fff; padding: 2px 5px; line-height: 15px; letter-spacing: -.36px; }
.vm-r2 { margin: 8px 0 0 2px; }
.vm-last { display: flex; justify-content: space-between; align-items: center; height: 24px; margin: 1px 0 0 2px; }
.vm-r3 { padding-top: 2px; }
.btn-set { width: 86px; height: 24px; background: #e5f1fb; border-color: #0078d7; font-size: 12px; letter-spacing: -.3px; }
.grp.vm-g2 { width: 368px; height: 92px; margin-top: 8px; padding: 0 0 0 13px; }
.win-vm .vm-g2 legend { margin-left: -8px; }
.vm-total { display: grid; grid-template-columns: 128px auto; grid-auto-rows: 21px; line-height: 21px; margin-top: 4px; }
.vm-foot { display: flex; justify-content: flex-end; gap: 9px; margin-top: 12px; padding-right: 8px; }
.btn-vm { width: 86px; height: 24px; font-size: 12px; letter-spacing: -.3px; }
.btn-def { border: 2px solid #0078d7; }

/* Annotation */
.note { position: absolute; left: 496px; top: 23px; width: 800px; text-align: center; font-size: 24px; line-height: 32.700px; color: #aeee00; white-space: nowrap; letter-spacing: -.37px; }
.strokes { position: absolute; left: 0; top: 0; pointer-events: none; }
.strokes path { fill: none; stroke-linecap: butt; stroke-linejoin: round; }
.s { stroke: #b6f800; stroke-width: 7; opacity: .92; }
.s-faint { stroke: #a8e600; stroke-width: 7; opacity: .45; }

/* Taskbar */
.taskbar { display: flex; height: 40px; background: #04203f; color: #fff; flex: none; }
.tb-fixed { width: 48px; height: 40px; display: flex; align-items: center; justify-content: center; flex: none; }
.tb-apps { display: grid; grid-template-columns: repeat(9, 45px) repeat(16, 44px); margin-left: 1px; flex: none; }
.slot { display: flex; align-items: center; justify-content: center; height: 40px; margin: 0 4px; padding-top: 2px; border-bottom: 2px solid transparent; }
.slot.on { border-bottom-color: #a6d3f2; }
.slot-active { margin: 0; background: #063b6e; }
.app-i { width: 24px; height: 24px; display: block; }
.calc { width: 20px; height: 27px; }
.t-i { font-family: "Liberation Sans", sans-serif; font-weight: 700; text-anchor: middle; }
.gear { fill: none; stroke: #fff; stroke-width: 4.500; }
.gear-t { fill: none; stroke: #fff; stroke-width: 4; stroke-dasharray: 4 3.460; }
.tray { display: flex; align-items: center; position: relative; flex: 1; font-size: 12px; letter-spacing: -.25px; }
.tray svg { fill: none; stroke: #eee; stroke-width: 1; flex: none; }
.tray .dim { stroke: #889; }
.tr-chev { margin-left: 8.500px; }
.tr-net { margin-left: 11px; }
.tr-vol { margin-left: 9px; }
.tr-lang { margin-left: 10px; }
.tr-clock { display: flex; flex-direction: column; align-items: center; width: 66px; margin-left: 10px; line-height: 18px; }
.tr-note { margin-left: 15px; }
.tr-edge { position: absolute; right: 4px; top: 0; width: 1px; height: 40px; background: #33506e; }
```
